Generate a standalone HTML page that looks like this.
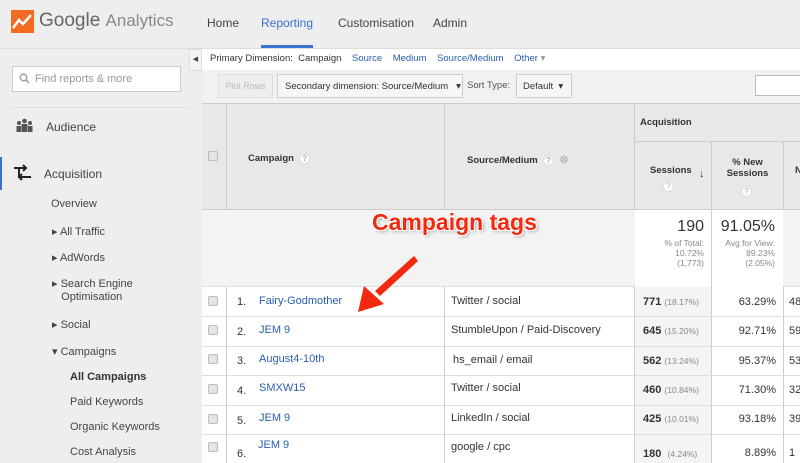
<!DOCTYPE html><html><head><style>
*{margin:0;padding:0;box-sizing:border-box}
body{width:800px;height:463px;overflow:hidden;background:#eee;font-family:"Liberation Sans",Arial,sans-serif;position:relative;color:#333}
.a{position:absolute}
.nav{font-size:12px;color:#444;top:16px}
.side{font-size:11px;color:#444}
.q{display:inline-block;width:11px;height:11px;border-radius:50%;background:#fff;border:1px solid #ddd;font-size:8px;color:#aaa;text-align:center;line-height:10px;vertical-align:middle}
.cb{position:absolute;left:208px;width:10px;height:10px;border:1px solid #bbb;background:#e6e6e6;border-radius:2px}
.lk{color:#2a5db0}
</style></head><body>
<svg class="a" style="left:11px;top:10px" width="23" height="23" viewBox="0 0 23 23"><rect width="23" height="23" fill="#f26b21"/><polyline points="2,18 8,10 12,14 20,5" fill="none" stroke="#fff" stroke-width="2.5"/></svg>
<div class="a" style="left:39px;top:10px;font-size:19px;color:#666">Google <span style="font-size:17px;color:#888">Analytics</span></div>
<div class="a nav" style="left:207px">Home</div>
<div class="a nav" style="left:261px;color:#3b6fd0">Reporting</div>
<div class="a" style="left:261px;top:45px;width:52px;height:3px;background:#3b6fd0"></div>
<div class="a nav" style="left:338px">Customisation</div>
<div class="a nav" style="left:433px">Admin</div>
<div class="a" style="left:0;top:48px;width:800px;height:1px;background:#ddd"></div>
<div class="a" style="left:12px;top:66px;width:169px;height:26px;background:#fff;border:1px solid #ccc;font-size:11px;color:#999;padding:6px 0 0 22px">Find reports &amp; more</div>
<svg class="a" style="left:19px;top:73px" width="11" height="11"><circle cx="4.5" cy="4.5" r="3.3" fill="none" stroke="#999" stroke-width="1.3"/><line x1="7" y1="7" x2="10" y2="10" stroke="#999" stroke-width="1.5"/></svg>
<div class="a" style="left:10px;top:107px;width:180px;height:1px;background:#ddd"></div>
<svg class="a" style="left:16px;top:118px" width="17" height="16"><circle cx="8.5" cy="3" r="2.3" fill="#555"/><circle cx="3" cy="5" r="2" fill="#555"/><circle cx="14" cy="5" r="2" fill="#555"/><rect x="5.5" y="6" width="6" height="8" fill="#555"/><rect x="0.5" y="8" width="4.5" height="6" fill="#555"/><rect x="12" y="8" width="4.5" height="6" fill="#555"/></svg>
<div class="a side" style="left:46px;top:120px;font-size:12px">Audience</div>
<div class="a" style="left:0;top:157px;width:2px;height:33px;background:#3b6fd0"></div>
<svg class="a" style="left:13px;top:163px" width="19" height="20"><path d="M1 5h12M10 2l3 3-3 3M18 14H6M9 11l-3 3 3 3M6 5v9" fill="none" stroke="#222" stroke-width="2"/></svg>
<div class="a side" style="left:44px;top:167px;font-size:12px">Acquisition</div>
<div class="a side" style="left:51px;top:198px">Overview</div>
<div class="a side" style="left:52px;top:225px">▸ All Traffic</div>
<div class="a side" style="left:52px;top:251px">▸ AdWords</div>
<div class="a side" style="left:52px;top:278px;line-height:13px">▸ Search Engine<br>&nbsp;&nbsp;&nbsp;Optimisation</div>
<div class="a side" style="left:52px;top:318px">▸ Social</div>
<div class="a side" style="left:52px;top:345px">▾ Campaigns</div>
<div class="a side" style="left:70px;top:371px;font-weight:bold;color:#333">All Campaigns</div>
<div class="a side" style="left:70px;top:396px">Paid Keywords</div>
<div class="a side" style="left:70px;top:421px">Organic Keywords</div>
<div class="a side" style="left:70px;top:446px">Cost Analysis</div>
<div class="a" style="left:189px;top:49px;width:13px;height:22px;background:#f4f4f4;border:1px solid #ddd;font-size:7px;text-align:center;line-height:20px;color:#444">◀</div>
<div class="a" style="left:202px;top:49px;width:598px;height:21px;background:#fff;font-size:9.5px;padding:4px 0 0 8px;color:#333">Primary Dimension: &nbsp;Campaign &nbsp;&nbsp;&nbsp;<span class="lk">Source</span> &nbsp;&nbsp;&nbsp;<span class="lk">Medium</span> &nbsp;&nbsp;&nbsp;<span class="lk">Source/Medium</span> &nbsp;&nbsp;&nbsp;<span class="lk">Other</span> <span style="color:#999">▾</span></div>
<div class="a" style="left:202px;top:70px;width:598px;height:33px;background:#f1f1f1"></div>
<div class="a" style="left:218px;top:74px;width:55px;height:24px;border:1px solid #ddd;background:#eee;font-size:9px;color:#bbb;text-align:center;line-height:22px">Plot Rows</div>
<div class="a" style="left:277px;top:74px;width:186px;height:24px;border:1px solid #ccc;background:#f6f6f6;font-size:9.5px;color:#333;padding:6px 0 0 7px">Secondary dimension: Source/Medium &nbsp;&nbsp;▾</div>
<div class="a" style="left:467px;top:80px;font-size:9.5px;color:#555">Sort Type:</div>
<div class="a" style="left:516px;top:74px;width:56px;height:24px;border:1px solid #ccc;background:#f6f6f6;font-size:9.5px;color:#333;padding:6px 0 0 6px">Default &nbsp;▾</div>
<div class="a" style="left:755px;top:75px;width:50px;height:21px;border:1px solid #bbb;background:#fff"></div>
<div class="a" style="left:202px;top:103px;width:598px;height:107px;background:#e8e8e8;border-top:1px solid #ccc;border-bottom:1px solid #ccc"></div>
<div class="a" style="left:634px;top:141px;width:166px;height:1px;background:#ccc"></div>
<div class="a" style="left:226px;top:103px;width:1px;height:360px;background:#ccc"></div>
<div class="a" style="left:444px;top:103px;width:1px;height:360px;background:#ccc"></div>
<div class="a" style="left:634px;top:103px;width:1px;height:360px;background:#ccc"></div>
<div class="a" style="left:711px;top:141px;width:1px;height:322px;background:#ccc"></div>
<div class="a" style="left:783px;top:141px;width:1px;height:322px;background:#ccc"></div>
<div class="cb" style="top:151px"></div>
<div class="a" style="left:248px;top:153px;font-size:9.5px;font-weight:bold">Campaign &nbsp;<span class="q">?</span></div>
<div class="a" style="left:467px;top:153px;font-size:9.5px;font-weight:bold">Source/Medium &nbsp;<span class="q">?</span> &nbsp;<span style="color:#bbb;font-size:11px">⊗</span></div>
<div class="a" style="left:640px;top:117px;font-size:9.5px;font-weight:bold">Acquisition</div>
<div class="a" style="left:650px;top:165px;font-size:9.5px;font-weight:bold">Sessions</div>
<div class="a" style="left:663px;top:178px"><span class="q">?</span></div>
<div class="a" style="left:699px;top:168px;font-size:11px">↓</div>
<div class="a" style="left:712px;top:157px;width:71px;font-size:9.5px;font-weight:bold;text-align:center;line-height:11px">% New<br>Sessions</div>
<div class="a" style="left:741px;top:183px"><span class="q">?</span></div>
<div class="a" style="left:795px;top:165px;font-size:9.5px;font-weight:bold">N</div>
<div class="a" style="left:202px;top:210px;width:598px;height:77px;background:#f3f3f3;border-bottom:1px solid #ddd"></div>
<div class="a" style="left:635px;top:210px;width:148px;height:77px;background:#fff"></div>
<div class="a" style="left:711px;top:210px;width:1px;height:77px;background:#ccc"></div>
<div class="a" style="left:635px;top:218px;width:69px;text-align:right;font-size:16px;color:#333">190</div>
<div class="a" style="left:635px;top:238px;width:69px;text-align:right;font-size:8.5px;color:#888;line-height:10px">% of Total:<br>10.72%<br>(1,773)</div>
<div class="a" style="left:712px;top:218px;width:63px;text-align:right;font-size:16px;color:#333">91.05%</div>
<div class="a" style="left:712px;top:238px;width:63px;text-align:right;font-size:8.5px;color:#888;line-height:10px">Avg for View:<br>89.23%<br>(2.05%)</div>
<div class="a" style="left:372px;top:209px;font-size:23px;font-weight:bold;color:#f2290e;text-shadow:1px 1px 0 #fff,-1px -1px 0 #fff,1px -1px 0 #fff,-1px 1px 0 #fff,2px 2px 3px rgba(0,0,0,.3)">Campaign tags</div>
<div class="a" style="left:202px;top:287px;width:598px;height:176px;background:#fff"></div>
<div class="a" style="left:634px;top:287px;width:77px;height:176px;background:#f4f4f4"></div>
<div class="a" style="left:226px;top:287px;width:1px;height:176px;background:#ccc"></div>
<div class="a" style="left:444px;top:287px;width:1px;height:176px;background:#ccc"></div>
<div class="a" style="left:634px;top:287px;width:1px;height:176px;background:#ccc"></div>
<div class="a" style="left:711px;top:287px;width:1px;height:176px;background:#ccc"></div>
<div class="a" style="left:783px;top:287px;width:1px;height:176px;background:#ccc"></div>
<div class="a" style="left:202px;top:316px;width:598px;height:1px;background:#ddd"></div>
<div class="a" style="left:202px;top:346px;width:598px;height:1px;background:#ddd"></div>
<div class="a" style="left:202px;top:375px;width:598px;height:1px;background:#ddd"></div>
<div class="a" style="left:202px;top:405px;width:598px;height:1px;background:#ddd"></div>
<div class="a" style="left:202px;top:434px;width:598px;height:1px;background:#ddd"></div>

<div class="cb" style="top:296px"></div><div class="a" style="left:237px;top:296px;font-size:11px">1.</div><div class="a lk" style="left:259px;top:295px;font-size:11px">Fairy-Godmother</div><div class="a" style="left:451px;top:295px;font-size:11px">Twitter / social</div><div class="a" style="left:643px;top:296px;font-size:11px;font-weight:bold">771 <span style="font-size:8.5px;color:#888;font-weight:normal">(18.17%)</span></div><div class="a" style="left:712px;top:296px;width:64px;text-align:right;font-size:11px">63.29%</div><div class="a" style="left:789px;top:296px;font-size:11px">48</div>

<div class="cb" style="top:325px"></div><div class="a" style="left:237px;top:326px;font-size:11px">2.</div><div class="a lk" style="left:259px;top:324px;font-size:11px">JEM 9</div><div class="a" style="left:451px;top:324px;font-size:11px">StumbleUpon / Paid-Discovery</div><div class="a" style="left:643px;top:325px;font-size:11px;font-weight:bold">645 <span style="font-size:8.5px;color:#888;font-weight:normal">(15.20%)</span></div><div class="a" style="left:712px;top:325px;width:64px;text-align:right;font-size:11px">92.71%</div><div class="a" style="left:789px;top:325px;font-size:11px">59</div>

<div class="cb" style="top:354px"></div><div class="a" style="left:237px;top:355px;font-size:11px">3.</div><div class="a lk" style="left:259px;top:353px;font-size:11px">August4-10th</div><div class="a" style="left:453px;top:354px;font-size:11px">hs_email / email</div><div class="a" style="left:643px;top:355px;font-size:11px;font-weight:bold">562 <span style="font-size:8.5px;color:#888;font-weight:normal">(13.24%)</span></div><div class="a" style="left:712px;top:355px;width:64px;text-align:right;font-size:11px">95.37%</div><div class="a" style="left:789px;top:355px;font-size:11px">53</div>

<div class="cb" style="top:384px"></div><div class="a" style="left:237px;top:385px;font-size:11px">4.</div><div class="a lk" style="left:259px;top:382px;font-size:11px">SMXW15</div><div class="a" style="left:451px;top:382px;font-size:11px">Twitter / social</div><div class="a" style="left:643px;top:384px;font-size:11px;font-weight:bold">460 <span style="font-size:8.5px;color:#888;font-weight:normal">(10.84%)</span></div><div class="a" style="left:712px;top:384px;width:64px;text-align:right;font-size:11px">71.30%</div><div class="a" style="left:789px;top:384px;font-size:11px">32</div>

<div class="cb" style="top:414px"></div><div class="a" style="left:237px;top:415px;font-size:11px">5.</div><div class="a lk" style="left:259px;top:412px;font-size:11px">JEM 9</div><div class="a" style="left:451px;top:412px;font-size:11px">LinkedIn / social</div><div class="a" style="left:643px;top:413px;font-size:11px;font-weight:bold">425 <span style="font-size:8.5px;color:#888;font-weight:normal">(10.01%)</span></div><div class="a" style="left:712px;top:413px;width:64px;text-align:right;font-size:11px">93.18%</div><div class="a" style="left:789px;top:413px;font-size:11px">39</div>

<div class="cb" style="top:442px"></div><div class="a" style="left:237px;top:448px;font-size:11px">6.</div><div class="a lk" style="left:258px;top:439px;font-size:11px">JEM 9</div><div class="a" style="left:451px;top:441px;font-size:11px">google / cpc</div><div class="a" style="left:643px;top:448px;font-size:11px;font-weight:bold">180 &nbsp;<span style="font-size:8.5px;color:#888;font-weight:normal">(4.24%)</span></div><div class="a" style="left:712px;top:447px;width:64px;text-align:right;font-size:11px">8.89%</div><div class="a" style="left:789px;top:447px;font-size:11px">1</div>

<svg class="a" style="left:350px;top:250px;z-index:5" width="70" height="70"><polygon points="64,6 68,11 30,46 25,41" fill="#f2290e"/><polygon points="8,62 14,36 34,54" fill="#f2290e"/></svg>
</body></html>
